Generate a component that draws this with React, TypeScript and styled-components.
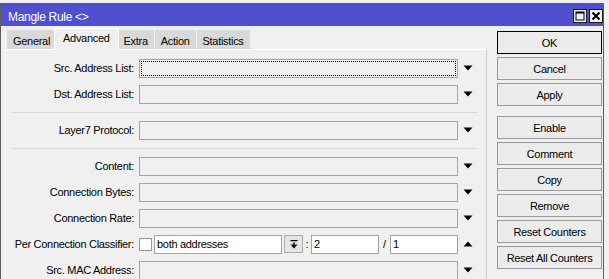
import React from 'react';
import styled, { createGlobalStyle } from 'styled-components';

const GlobalStyle = createGlobalStyle`
  html, body {
    margin: 0;
    padding: 0;
    background: #f0f0f0;
    overflow: hidden;
  }
  body {
    font-family: "Liberation Sans", Arial, sans-serif;
    font-size: 11px;
    letter-spacing: -0.3px;
    color: #000;
  }
`;

const Window = styled.div`
  margin-top: 3px;
  width: 604px;
  height: 276px;
  box-sizing: border-box;
  border: 1px solid #5f5f5f;
  border-bottom: none;
  background: #f0f0f0;
  display: flex;
  flex-direction: column;
`;

const TitleBar = styled.div`
  height: 22px;
  flex: none;
  background: #4e50cd;
  display: flex;
  align-items: center;
  padding-left: 7px;
  color: #fff;
`;

const Title = styled.span`
  flex: 1;
  padding-top: 3px;
  font-size: 12px;
`;

const TitleButton = styled.div`
  width: 14px;
  height: 14px;
  box-sizing: border-box;
  margin: 2px 0 0 2px;
  border: 1px solid #1a1a1a;
  background: #f0f0f0;
  display: flex;
  align-items: center;
  justify-content: center;
`;

const Body = styled.div`
  flex: 1;
  display: flex;
  min-height: 0;
`;

const TabArea = styled.div`
  width: 482px;
  margin-left: 4px;
  display: flex;
  flex-direction: column;
`;

const TabStrip = styled.div`
  height: 23px;
  flex: none;
  display: flex;
  align-items: flex-end;
  padding-left: 1px;
`;

const Tab = styled.div<{ $active?: boolean }>`
  position: relative;
  box-sizing: border-box;
  display: flex;
  align-items: center;
  white-space: nowrap;
  height: ${p => (p.$active ? '22px' : '19px')};
  padding: ${p => (p.$active ? '0 8px 3px' : '2px 6px 0')};
  margin: ${p => (p.$active ? '0 -2px -1px' : '0 0 0 1px')};
  background: ${p => (p.$active ? '#f0f0f0' : '#d9d9d9')};
  border: ${p => (p.$active ? '1px solid #fff' : 'none')};
  border-bottom: none;
  z-index: ${p => (p.$active ? 1 : 0)};
`;

const Panel = styled.div`
  flex: 1;
  border-top: 1px solid #fff;
  border-left: 1px solid #fff;
  border-right: 1px solid #d0d0d0;
  padding-top: 5px;
`;

const Row = styled.div`
  height: 26px;
  display: grid;
  grid-template-columns: 128px 319px 10px;
  column-gap: 5px;
  align-items: center;
`;

const Label = styled.div`
  text-align: right;
  white-space: nowrap;
`;

const TextBox = styled.div<{ $white?: boolean; $focused?: boolean }>`
  height: 19px;
  box-sizing: border-box;
  border: 1px solid #a5a5a5;
  background: ${p => (p.$white ? '#fff' : '#f0f0f0')};
  padding-left: 2px;
  display: flex;
  align-items: center;
  min-width: 0;
  outline: ${p => (p.$focused ? '1px dotted #000' : 'none')};
  outline-offset: -3px;
`;

const Separator = styled.div`
  margin: 5px 8px 4px 7px;
  border-top: 1px solid #d9d9d9;
`;

const FieldGroup = styled.div`
  display: flex;
  align-items: center;
`;

const CheckBox = styled.div`
  width: 13px;
  height: 13px;
  box-sizing: border-box;
  border: 1px solid #9a9a9a;
  background: #fff;
  margin-right: 2px;
  flex: none;
`;

const SmallButton = styled.div`
  width: 19px;
  height: 18px;
  box-sizing: border-box;
  margin-left: 2px;
  border: 1px solid #adadad;
  background: #e5e5e5;
  display: flex;
  align-items: center;
  justify-content: center;
  flex: none;
`;

const Punct = styled.span<{ $w: number }>`
  width: ${p => p.$w}px;
  text-align: center;
  flex: none;
`;

const ButtonColumn = styled.div`
  width: 105px;
  margin-left: 10px;
  padding-top: 5px;
  display: flex;
  flex-direction: column;
`;

const Button = styled.div<{ $default?: boolean; $spaced?: boolean }>`
  height: 23px;
  box-sizing: border-box;
  margin-bottom: ${p => (p.$spaced ? '10px' : '3px')};
  border: 1px solid ${p => (p.$default ? '#000' : '#9a9a9a')};
  background: #ececec;
  display: flex;
  align-items: center;
  justify-content: center;
  white-space: nowrap;
`;

const Arrow = ({ up }: { up?: boolean }) => (
  <svg width="10" height="6" viewBox="0 0 10 6">
    <polygon points={up ? '0.5,5.5 9.5,5.5 5,0.5' : '0.5,0.5 9.5,0.5 5,5.5'} fill="#000" />
  </svg>
);

const fields: { label: string; sepBefore?: boolean; focused?: boolean }[] = [
  { label: 'Src. Address List:', focused: true },
  { label: 'Dst. Address List:' },
  { label: 'Layer7 Protocol:', sepBefore: true },
  { label: 'Content:', sepBefore: true },
  { label: 'Connection Bytes:' },
  { label: 'Connection Rate:' },
];

const tabs = ['General', 'Advanced', 'Extra', 'Action', 'Statistics'];

const buttons = [
  'OK',
  'Cancel',
  'Apply',
  'Enable',
  'Comment',
  'Copy',
  'Remove',
  'Reset Counters',
  'Reset All Counters',
];

export default function App() {
  return (
    <>
      <GlobalStyle />
      <Window>
        <TitleBar>
          <Title>Mangle Rule &lt;&gt;</Title>
          <TitleButton>
            <svg width="10" height="10" viewBox="0 0 10 10">
              <rect x="1" y="1" width="8" height="8" fill="none" stroke="#000" strokeWidth="1" />
              <rect x="1" y="1" width="8" height="1.5" fill="#000" />
            </svg>
          </TitleButton>
          <TitleButton>
            <svg width="10" height="10" viewBox="0 0 10 10">
              <path d="M1.5 1.5 L8.5 8.5 M8.5 1.5 L1.5 8.5" stroke="#000" strokeWidth="2" />
            </svg>
          </TitleButton>
        </TitleBar>
        <Body>
          <TabArea>
            <TabStrip>
              {tabs.map(t => (
                <Tab key={t} $active={t === 'Advanced'}>
                  {t}
                </Tab>
              ))}
            </TabStrip>
            <Panel>
              {fields.map(f => (
                <React.Fragment key={f.label}>
                  {f.sepBefore && <Separator />}
                  <Row>
                    <Label>{f.label}</Label>
                    <TextBox $focused={f.focused} />
                    <Arrow />
                  </Row>
                </React.Fragment>
              ))}
              <Row>
                <Label>Per Connection Classifier:</Label>
                <FieldGroup>
                  <CheckBox />
                  <TextBox $white style={{ width: 128 }}>both addresses</TextBox>
                  <SmallButton>
                    <svg width="8" height="9" viewBox="0 0 8 9">
                      <rect x="0.5" y="0" width="7" height="1.2" fill="#000" />
                      <rect x="3.3" y="2.4" width="1.4" height="2.4" fill="#000" />
                      <polygon points="0.5,4.6 7.5,4.6 4,8.4" fill="#000" />
                    </svg>
                  </SmallButton>
                  <Punct $w={8}>:</Punct>
                  <TextBox $white style={{ width: 68 }}>2</TextBox>
                  <Punct $w={11}>/</Punct>
                  <TextBox $white style={{ flex: 1 }}>1</TextBox>
                </FieldGroup>
                <Arrow up />
              </Row>
              <Row>
                <Label>Src. MAC Address:</Label>
                <TextBox />
                <Arrow />
              </Row>
            </Panel>
          </TabArea>
          <ButtonColumn>
            {buttons.map(b => (
              <Button key={b} $default={b === 'OK'} $spaced={b === 'Apply'}>
                {b}
              </Button>
            ))}
          </ButtonColumn>
        </Body>
      </Window>
    </>
  );
}
